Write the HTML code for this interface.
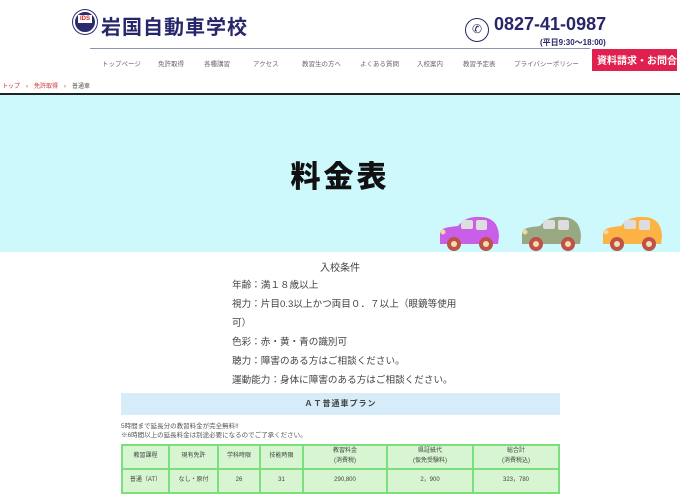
<!DOCTYPE html>
<html><head><meta charset="utf-8"><style>
*{margin:0;padding:0;box-sizing:border-box}
body{width:680px;height:480px;overflow:hidden;background:#fff;font-family:"Liberation Sans","Noto Sans CJK JP",sans-serif;position:relative;color:#333}
.a{position:absolute}
.nav span{position:absolute;top:58px;font-size:6.5px;color:#666;white-space:nowrap}
table{position:absolute;left:121px;top:444px;border-collapse:collapse;width:439px}
td{border:2px solid #7dde7d;background:#d6f5d0;font-size:6px;text-align:center;color:#444;height:24px;line-height:1.6}
</style></head><body>
<div class="a" style="left:73px;top:10px;width:24px;height:24px;border-radius:50%;background:#2a2a6e;border:2px solid #fff;box-shadow:0 0 0 1px #2a2a6e"><div style="position:absolute;left:3px;top:3px;width:14px;height:8px;background:#fff;color:#d22;font-size:6px;font-weight:bold;line-height:8px;text-align:center">IDS</div></div>
<div class="a" style="left:101px;top:11px;font-size:20px;font-weight:bold;color:#26266a;letter-spacing:1px">岩国自動車学校</div>
<div class="a" style="left:465px;top:18px;width:24px;height:24px;border-radius:50%;border:1.5px solid #26266a;font-size:12px;text-align:center;line-height:21px;color:#26266a">✆</div>
<div class="a" style="left:494px;top:14px;font-size:18px;font-weight:bold;color:#26266a">0827-41-0987</div>
<div class="a" style="left:540px;top:37px;font-size:8px;font-weight:bold;color:#26266a">(平日9:30〜18:00)</div>
<div class="a" style="left:90px;top:48px;width:500px;height:1px;background:#8a95b8"></div>
<div class="nav"><span style="left:102px">トップページ</span><span style="left:158px">免許取得</span><span style="left:204px">各種講習</span><span style="left:253px">アクセス</span><span style="left:302px">教習生の方へ</span><span style="left:360px">よくある質問</span><span style="left:417px">入校案内</span><span style="left:463px">教習予定表</span><span style="left:514px">プライバシーポリシー</span></div>
<div class="a" style="left:592px;top:49px;width:85px;height:22px;background:#e0204e;color:#fff;font-size:10px;font-weight:bold;padding:3px 5px;white-space:nowrap;overflow:hidden">資料請求・お問合</div>
<div class="a" style="left:2px;top:81px;font-size:6px;color:#c33">トップ　›　免許取得　›　<span style="color:#555">普通車</span></div>
<div class="a" style="left:0;top:93px;width:680px;height:2px;background:#222"></div>
<div class="a" style="left:0;top:95px;width:680px;height:157px;background:#cdf8fc"></div>
<div class="a" style="left:0;top:152px;width:680px;text-align:center;font-size:30px;font-weight:900;color:#111;letter-spacing:3px">料金表</div>
<svg class="a" style="left:436px;top:214px" width="70" height="42"><path d="M4 20 Q4 14 14 13 L22 12 Q30 2 44 3 Q62 3 63 22 L62 30 L4 30 Z" fill="#c95ee8"/><rect x="25" y="6" width="12" height="9" fill="#ddd" rx="2"/><rect x="40" y="6" width="11" height="10" fill="#ddd" rx="2"/><circle cx="7" cy="18" r="2.5" fill="#f2d7a0"/><circle cx="18" cy="30" r="7" fill="#c0504a"/><circle cx="18" cy="30" r="3" fill="#f2e0a8"/><circle cx="50" cy="30" r="7" fill="#c0504a"/><circle cx="50" cy="30" r="3" fill="#f2e0a8"/></svg>
<svg class="a" style="left:518px;top:214px" width="70" height="42"><path d="M4 20 Q4 14 14 13 L22 12 Q30 2 44 3 Q62 3 63 22 L62 30 L4 30 Z" fill="#98a882"/><rect x="25" y="6" width="12" height="9" fill="#ddd" rx="2"/><rect x="40" y="6" width="11" height="10" fill="#ddd" rx="2"/><circle cx="7" cy="18" r="2.5" fill="#f2d7a0"/><circle cx="18" cy="30" r="7" fill="#c0504a"/><circle cx="18" cy="30" r="3" fill="#f2e0a8"/><circle cx="50" cy="30" r="7" fill="#c0504a"/><circle cx="50" cy="30" r="3" fill="#f2e0a8"/></svg>
<svg class="a" style="left:599px;top:214px" width="81" height="42"><path d="M4 20 Q4 14 14 13 L22 12 Q30 2 44 3 Q62 3 63 22 L62 30 L4 30 Z" fill="#fdb343"/><rect x="25" y="6" width="12" height="9" fill="#ddd" rx="2"/><rect x="40" y="6" width="11" height="10" fill="#ddd" rx="2"/><circle cx="7" cy="18" r="2.5" fill="#f2d7a0"/><circle cx="18" cy="30" r="7" fill="#c0504a"/><circle cx="18" cy="30" r="3" fill="#f2e0a8"/><circle cx="50" cy="30" r="7" fill="#c0504a"/><circle cx="50" cy="30" r="3" fill="#f2e0a8"/></svg>
<div class="a" style="left:0;top:252px;width:680px;height:8px;background:#fff"></div>
<div class="a" style="left:0;top:259px;width:680px;text-align:center;font-size:10px;color:#444">入校条件</div>
<div class="a" style="left:232px;top:276px;font-size:9.6px;line-height:19px;color:#444;width:240px">年齢：満１８歳以上<br>視力：片目0.3以上かつ両目０．７以上（眼鏡等使用<br>可）<br>色彩：赤・黄・青の識別可<br>聴力：障害のある方はご相談ください。<br>運動能力：身体に障害のある方はご相談ください。</div>
<div class="a" style="left:121px;top:393px;width:439px;height:22px;background:#d6ecf8;text-align:center;font-size:8px;font-weight:bold;line-height:22px;color:#444;letter-spacing:1px">ＡＴ普通車プラン</div>
<div class="a" style="left:121px;top:422px;font-size:6.5px;line-height:9px;color:#555">5時間まで延長分の教習料金が完全無料!!<br>※6時間以上の延長料金は別途必要になるのでご了承ください。</div>
<table><tr><td style="width:47px">教習課程</td><td style="width:49px">現有免許</td><td style="width:42px">学科時限</td><td style="width:43px">技能時限</td><td style="width:84px">教習料金<br>(消費税)</td><td style="width:86px">県証紙代<br>(仮免受験料)</td><td>総合計<br>(消費税込)</td></tr>
<tr><td>普通（AT）</td><td>なし・原付</td><td>26</td><td>31</td><td>290,800</td><td>2，900</td><td>323，780</td></tr></table>
</body></html>
